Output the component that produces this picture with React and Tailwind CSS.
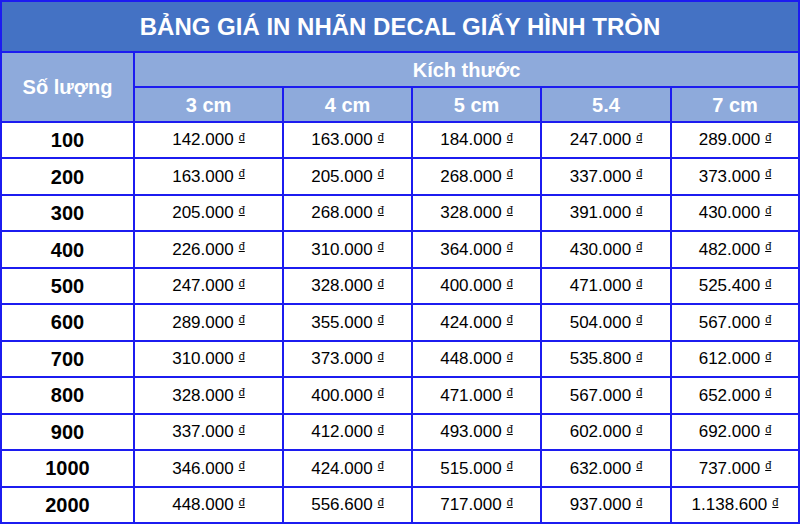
import React from "react"

const sizes = ["3 cm", "4 cm", "5 cm", "5.4", "7 cm"]

const rows = [
  ["100", "142.000", "163.000", "184.000", "247.000", "289.000"],
  ["200", "163.000", "205.000", "268.000", "337.000", "373.000"],
  ["300", "205.000", "268.000", "328.000", "391.000", "430.000"],
  ["400", "226.000", "310.000", "364.000", "430.000", "482.000"],
  ["500", "247.000", "328.000", "400.000", "471.000", "525.400"],
  ["600", "289.000", "355.000", "424.000", "504.000", "567.000"],
  ["700", "310.000", "373.000", "448.000", "535.800", "612.000"],
  ["800", "328.000", "400.000", "471.000", "567.000", "652.000"],
  ["900", "337.000", "412.000", "493.000", "602.000", "692.000"],
  ["1000", "346.000", "424.000", "515.000", "632.000", "737.000"],
  ["2000", "448.000", "556.600", "717.000", "937.000", "1.138.600"],
]

const Price = ({ value }) => (
  <div className="flex items-center justify-center bg-white text-[17px] text-black">
    <span>{value}</span>
    <span className="ml-[5px] relative -top-[3px] text-[11px] underline">đ</span>
  </div>
)

const App = () => {
  return (
    <div
      className="grid h-[524px] w-[800px] grid-cols-[131px_147px_127px_127px_128px_126px] grid-rows-[49px_33px_33px_repeat(11,1fr)] gap-[2px] border-2 border-[#1c1cf0] bg-[#1c1cf0]"
      style={{ fontFamily: '"Liberation Sans", Arial, sans-serif' }}
    >
      <div className="col-span-6 flex items-center justify-center bg-[#4472c4] text-[24px] font-bold text-white">
        BẢNG GIÁ IN NHÃN DECAL GIẤY HÌNH TRÒN
      </div>
      <div className="row-span-2 flex items-center justify-center bg-[#8eaadb] text-[20px] font-bold text-white">
        Số lượng
      </div>
      <div className="col-span-5 flex items-center justify-center bg-[#8eaadb] text-[20px] font-bold text-white">
        Kích thước
      </div>
      {sizes.map((s) => (
        <div key={s} className="flex items-center justify-center bg-[#8eaadb] text-[20px] font-bold text-white">
          {s}
        </div>
      ))}
      {rows.map((r) => (
        <React.Fragment key={r[0]}>
          <div className="flex items-center justify-center bg-white text-[20px] font-bold text-black">{r[0]}</div>
          {r.slice(1).map((v, i) => (
            <Price key={i} value={v} />
          ))}
        </React.Fragment>
      ))}
    </div>
  )
}

export default App
